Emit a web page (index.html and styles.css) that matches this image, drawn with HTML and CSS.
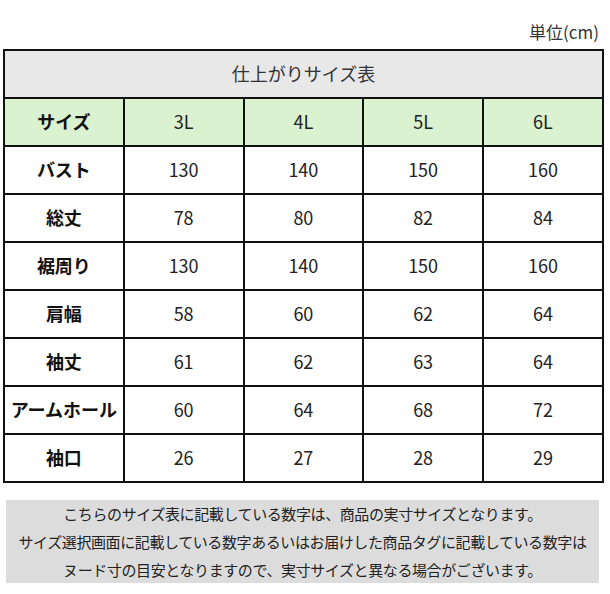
FILE: index.html
```html
<!DOCTYPE html>
<html lang="ja">
<head>
<meta charset="utf-8">
<link rel="stylesheet" href="styles.css">
</head>
<body>
<div class="page">
  <div class="unit">単位(cm)</div>
  <table class="size-table">
    <tr><td class="title" colspan="5">仕上がりサイズ表</td></tr>
    <tr class="head">
      <th>サイズ</th><td>3L</td><td>4L</td><td>5L</td><td>6L</td>
    </tr>
    <tr><th>バスト</th><td>130</td><td>140</td><td>150</td><td>160</td></tr>
    <tr><th>総丈</th><td>78</td><td>80</td><td>82</td><td>84</td></tr>
    <tr><th>裾周り</th><td>130</td><td>140</td><td>150</td><td>160</td></tr>
    <tr><th>肩幅</th><td>58</td><td>60</td><td>62</td><td>64</td></tr>
    <tr><th>袖丈</th><td>61</td><td>62</td><td>63</td><td>64</td></tr>
    <tr><th>アームホール</th><td>60</td><td>64</td><td>68</td><td>72</td></tr>
    <tr><th>袖口</th><td>26</td><td>27</td><td>28</td><td>29</td></tr>
  </table>
  <div class="note">
    <p>こちらのサイズ表に記載している数字は、商品の実寸サイズとなります。</p>
    <p>サイズ選択画面に記載している数字あるいはお届けした商品タグに記載している数字は</p>
    <p>ヌード寸の目安となりますので、実寸サイズと異なる場合がございます。</p>
  </div>
</div>
</body>
</html>
```
FILE: styles.css
```css
html, body {
  margin: 0;
  padding: 0;
  background: #fff;
}
body {
  font-family: "Noto Sans CJK JP", "Noto Sans", sans-serif;
  color: #222;
}
.page {
  width: 610px;
  height: 594px;
  overflow: hidden;
}
.unit {
  height: 49px;
  box-sizing: border-box;
  padding: 20px 11px 0 0;
  text-align: right;
  font-size: 17px;
  line-height: 24px;
  color: #333;
}
.size-table {
  margin-left: 3px;
  border-collapse: collapse;
  table-layout: fixed;
  width: 601px;
}
.size-table th,
.size-table td {
  border: 2px solid #111;
  width: 120px;
  height: 43px;
  padding: 0 0 3px 0;
  text-align: center;
  vertical-align: middle;
  font-size: 18px;
  line-height: 20px;
}
.size-table th {
  font-weight: bold;
  color: #111;
}
.size-table td {
  font-weight: normal;
}
.size-table .title {
  background: #e8e8e8;
  color: #333;
  font-size: 18px;
}
.size-table .head th,
.size-table .head td {
  background: #daf2d0;
}
.note {
  margin: 17px 0 0 6px;
  width: 593px;
  height: 83px;
  background: #dcdcdc;
  text-align: center;
  font-size: 15px;
  color: #222;
  box-sizing: border-box;
}
.note p {
  margin: 0;
  line-height: 28px;
  letter-spacing: -0.4px;
}
```
